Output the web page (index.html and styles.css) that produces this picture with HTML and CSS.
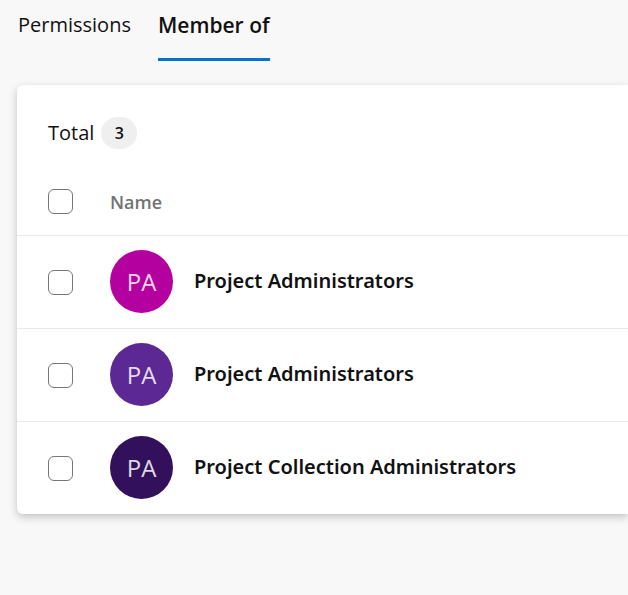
FILE: index.html
```
<!DOCTYPE html>
<html lang="en">
<head>
    <meta charset="UTF-8">
    <meta name="viewport" content="width=device-width, initial-scale=1.0">
    <title>Member of</title>
    <link rel="stylesheet" href="styles.css">
</head>
<body>
    <nav class="tabs">
        <a class="tab" href="#permissions">Permissions</a>
        <a class="tab active" href="#member-of">Member of</a>
    </nav>

    <main class="card">
        <div class="total">
            <span>Total</span>
            <span class="badge">3</span>
        </div>
        <table class="groups">
            <thead>
                <tr>
                    <th class="check"><input type="checkbox" aria-label="Select all"></th>
                    <th class="name" colspan="2">Name</th>
                </tr>
            </thead>
            <tbody>
                <tr>
                    <td class="check"><input type="checkbox" id="group1"></td>
                    <td class="icon"><span class="avatar magenta">PA</span></td>
                    <td class="group"><label for="group1">Project Administrators</label></td>
                </tr>
                <tr>
                    <td class="check"><input type="checkbox" id="group2"></td>
                    <td class="icon"><span class="avatar purple">PA</span></td>
                    <td class="group"><label for="group2">Project Administrators</label></td>
                </tr>
                <tr>
                    <td class="check"><input type="checkbox" id="group3"></td>
                    <td class="icon"><span class="avatar indigo">PA</span></td>
                    <td class="group"><label for="group3">Project Collection Administrators</label></td>
                </tr>
            </tbody>
        </table>
    </main>
</body>
</html>
```
FILE: styles.css
```
* {
    box-sizing: border-box;
}

body {
    min-height: 100vh;
    margin: 0;
    padding-bottom: 32px;
    background-color: #f8f8f8;
    color: #111;
    font-family: "Segoe UI", "Open Sans", "Noto Sans", sans-serif;
    font-size: 20px;
}

/* Tabs */
.tabs {
    display: flex;
    gap: 27px;
    padding-left: 18px;
}

.tab {
    height: 61px;
    padding-top: 10px;
    line-height: 30px;
    color: inherit;
    text-decoration: none;
    border-bottom: 3px solid transparent;
}

.tab.active {
    font-size: 21px;
    font-weight: 600;
    border-bottom-color: #0072d0;
}

/* Card, runs off the right edge of the window */
.card {
    margin: 24px 0 0 17px;
    background-color: #fff;
    border-radius: 6px 0 0 6px;
    box-shadow: 0 3px 8px rgba(0, 0, 0, 0.22);
}

.total {
    display: flex;
    align-items: center;
    gap: 7px;
    padding: 32px 31px 0;
    line-height: 32px;
}

.badge {
    width: 36px;
    border-radius: 16px;
    background-color: #efefef;
    font-size: 16px;
    font-weight: 600;
    text-align: center;
}

.groups {
    width: 100%;
    border-collapse: collapse;
}

.groups th,
.groups td {
    height: 93px;
    padding: 0;
    text-align: left;
    vertical-align: middle;
}

.groups tbody tr {
    border-top: 1px solid #eaeaea;
}

.groups th {
    height: 86px;
    padding-top: 20px;
}

.groups .name {
    color: #737373;
    font-size: 18px;
    font-weight: 600;
}

.groups .group {
    padding-bottom: 2px;
    font-family: "Segoe UI", "Noto Sans", sans-serif;
    font-size: 20px;
    font-weight: 600;
}

.groups .check {
    width: 93px;
    padding-left: 31px;
}

.groups td.check {
    padding-top: 2px;
}

.groups .icon {
    width: 84px;
}

.check input {
    appearance: none;
    display: block;
    width: 25px;
    height: 25px;
    margin: 0;
    border: 1px solid #777;
    border-radius: 6px;
    background-color: #fff;
}

.check input:checked {
    background-color: #0072d0;
}

.avatar {
    display: block;
    width: 63px;
    height: 63px;
    border-radius: 50%;
    color: rgba(255, 255, 255, 0.85);
    font-size: 24px;
    line-height: 63px;
    text-align: center;
}

.magenta { background-color: #b4009e; }
.purple { background-color: #5c2893; }
.indigo { background-color: #32105c; }
```
